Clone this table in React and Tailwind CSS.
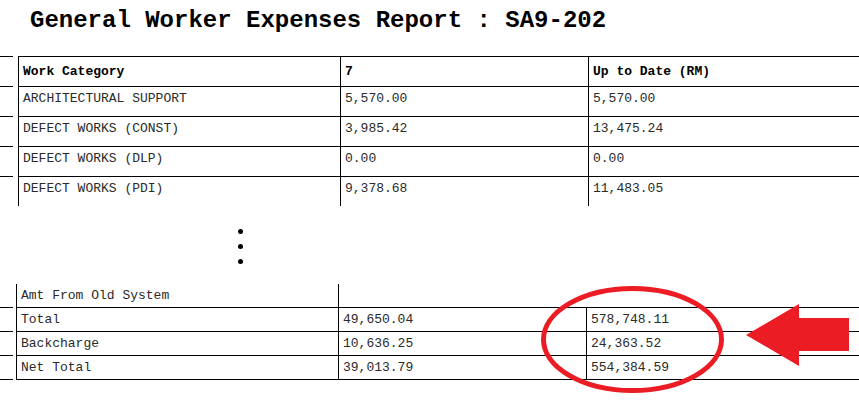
import React from "react";

const topRows = [
  ["ARCHITECTURAL SUPPORT", "5,570.00", "5,570.00"],
  ["DEFECT WORKS (CONST)", "3,985.42", "13,475.24"],
  ["DEFECT WORKS (DLP)", "0.00", "0.00"],
  ["DEFECT WORKS (PDI)", "9,378.68", "11,483.05"],
];

const bottomRows = [
  ["Total", "49,650.04", "578,748.11"],
  ["Backcharge", "10,636.25", "24,363.52"],
  ["Net Total", "39,013.79", "554,384.59"],
];

function TopRow({ cells, header }) {
  const pt = header ? "pt-[7px] font-bold text-black" : "pt-[4px] text-[#2a2a2a]";
  return (
    <div className="flex h-[30px]">
      <div className="w-[13px] border-t border-black" />
      <div className="ml-[5px] flex flex-1 border-t border-black">
        <div className={`w-[322px] border-l border-black pl-[4px] ${pt}`}>{cells[0]}</div>
        <div className={`w-[248px] border-l border-black pl-[4px] ${pt}`}>{cells[1]}</div>
        <div className={`flex-1 border-l border-black pl-[4px] ${pt}`}>{cells[2]}</div>
      </div>
    </div>
  );
}

function BottomRow({ cells }) {
  return (
    <div className="flex h-[24px]">
      <div className="w-[13px] border-t border-black" />
      <div className="ml-[3px] flex flex-1 border-t border-black">
        <div className="w-[322px] border-l border-black pl-[4px] pt-[4px]">{cells[0]}</div>
        <div className="w-[248px] border-l border-black pl-[4px] pt-[4px]">{cells[1]}</div>
        <div className="flex-1 border-l border-black pl-[4px] pt-[4px]">{cells[2]}</div>
      </div>
    </div>
  );
}

export default function App() {
  return (
    <div
      className="relative w-[859px] h-[403px] overflow-hidden bg-white text-black"
      style={{ fontFamily: '"Liberation Mono", "Courier New", monospace' }}
    >
      <div className="pt-[9px] pl-[30px] text-[24px] leading-[24px] font-bold">
        General Worker Expenses Report : SA9-202
      </div>

      <div className="mt-[23px] text-[13px] leading-[15px]">
        <TopRow header cells={["Work Category", "7", "Up to Date (RM)"]} />
        {topRows.map((r) => (
          <TopRow key={r[0]} cells={r} />
        ))}
      </div>

      <div className="mt-[23px] ml-[238px] flex flex-col gap-[10px]">
        <div className="w-[5px] h-[5px] rounded-full bg-black" />
        <div className="w-[5px] h-[5px] rounded-full bg-black" />
        <div className="w-[5px] h-[5px] rounded-full bg-black" />
      </div>

      <div className="mt-[20px] text-[13px] leading-[15px] text-[#2a2a2a]">
        <div className="flex h-[23px]">
          <div className="w-[13px]" />
          <div className="ml-[3px] flex flex-1">
            <div className="w-[322px] border-l border-black pl-[4px] pt-[4px]">Amt From Old System</div>
            <div className="w-[248px] border-l border-black" />
            <div className="flex-1" />
          </div>
        </div>
        {bottomRows.map((r) => (
          <BottomRow key={r[0]} cells={r} />
        ))}
        <div className="flex">
          <div className="w-[13px] border-t border-black" />
          <div className="ml-[3px] flex-1 border-t border-black" />
        </div>
      </div>

      <svg
        className="pointer-events-none absolute left-0 top-0"
        width="859"
        height="403"
        viewBox="0 0 859 403"
      >
        <ellipse cx="632.5" cy="339.5" rx="89" ry="51" fill="none" stroke="#ec1c24" strokeWidth="5" />
        <polygon
          points="746,335 799,304 799,318 849,318 849,351 799,351 799,366"
          fill="#ec1c24"
        />
      </svg>
    </div>
  );
}
